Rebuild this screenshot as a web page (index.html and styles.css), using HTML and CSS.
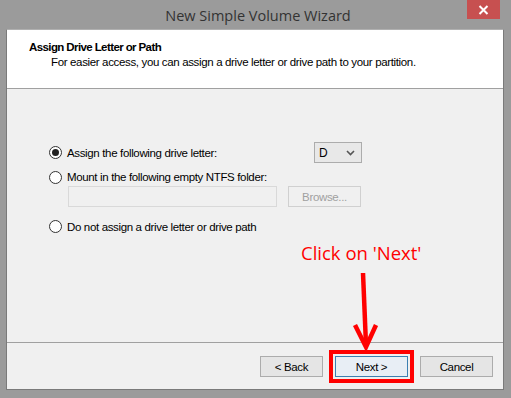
FILE: index.html
```html
<!DOCTYPE html>
<html lang="en">
<head>
  <meta charset="UTF-8" />
  <title>New Simple Volume Wizard</title>
  <link rel="stylesheet" href="styles.css">
</head>
<body>
  <div class="window">
    <div class="titlebar">
      <span class="title">New Simple Volume Wizard</span>
      <div class="close">
        <svg width="11" height="10" viewBox="0 0 11 10"><path d="M1.5 1 L9.5 9 M9.5 1 L1.5 9" stroke="#fff" stroke-width="2"/></svg>
      </div>
    </div>

    <div class="content">
      <div class="head">
        <div class="head-title">Assign Drive Letter or Path</div>
        <div class="head-sub">For easier access, you can assign a drive letter or drive path to your partition.</div>
      </div>

      <div class="main">
        <div class="row">
          <span class="radio checked"></span>
          <span class="label">Assign the following drive letter:</span>
          <div class="combo"><span>D</span>
            <svg width="9" height="6" viewBox="0 0 9 6"><path d="M1 1 L4.5 4.5 L8 1" fill="none" stroke="#555" stroke-width="1.6"/></svg>
          </div>
        </div>
        <div class="row row2">
          <span class="radio"></span>
          <span class="label">Mount in the following empty NTFS folder:</span>
        </div>
        <div class="folder-row">
          <div class="field"></div>
          <div class="btn disabled">Browse...</div>
        </div>
        <div class="row row3">
          <span class="radio"></span>
          <span class="label">Do not assign a drive letter or drive path</span>
        </div>

        <!-- annotation -->
        <div class="note">Click on 'Next'</div>
        <svg class="arrow" width="30" height="78" viewBox="0 0 30 78">
          <path d="M13 0 L16 72" stroke="#f00" stroke-width="4.5"/>
          <path d="M5 52 L16 74 L26 52" fill="none" stroke="#f00" stroke-width="4.5"/>
        </svg>
      </div>

      <div class="footer">
        <div class="btn">&lt; Back</div>
        <div class="btn next">Next &gt;</div>
        <div class="btn cancel">Cancel</div>
      </div>
    </div>
  </div>
</body>
</html>
```

FILE: styles.css
```css
* { margin: 0; padding: 0; box-sizing: border-box; }
html, body {
  width: 511px;
  height: 398px;
  overflow: hidden;
  background: #9b9b9b;
  font-family: 'Liberation Sans', Arial, sans-serif;
  font-size: 11.5px;
  letter-spacing: -0.35px;
  color: #000;
}

.window {
  display: flex;
  flex-direction: column;
  height: 398px;
  padding: 0 7px 8px 6px;
}

.titlebar {
  position: relative;
  height: 29px;
  display: flex;
  align-items: center;
  justify-content: center;
}
.title {
  font-family: 'Open Sans', sans-serif;
  font-size: 14.5px;
  letter-spacing: 0;
  color: #333;
  padding-left: 6px;
  padding-top: 1px;
}
.close {
  position: absolute;
  top: 0;
  right: 4px;
  width: 33px;
  height: 19px;
  background: #c75050;
  display: flex;
  align-items: center;
  justify-content: center;
}

.content {
  flex: 1;
  display: flex;
  flex-direction: column;
  background: #f0f0f0;
  border: 1px solid #7a7a7a;
  border-top-color: #b0b0b0;
}

.head {
  height: 59px;
  background: #fff;
  border-bottom: 1px solid #a0a0a0;
  padding: 10px 0 0 22px;
}
.head-title {
  font-weight: bold;
  letter-spacing: -0.6px;
  line-height: 14px;
}
.head-sub {
  padding-left: 22px;
  line-height: 16px;
}

.main {
  position: relative;
  flex: 1;
  padding: 53px 0 0 42px;
  border-bottom: 1px solid #a0a0a0;
}

.row {
  display: flex;
  align-items: center;
  height: 21px;
}
.row2 { height: 14px; margin-top: 7px; }
.row3 { margin-top: 9px; }
.radio {
  width: 13px;
  height: 13px;
  border: 1px solid #333;
  border-radius: 50%;
  background: #fff;
  display: flex;
  align-items: center;
  justify-content: center;
}
.radio.checked::after {
  content: "";
  width: 7px;
  height: 7px;
  border-radius: 50%;
  background: #222;
}
.label { margin-left: 5px; }

.combo {
  margin-left: auto;
  margin-right: 141px;
  width: 48px;
  height: 21px;
  border: 1px solid #acacac;
  background: #e8e8e8;
  display: flex;
  align-items: center;
  justify-content: space-between;
  padding: 0 6px 0 4px;
  font-size: 12px;
}

.folder-row {
  display: flex;
  gap: 11px;
  margin: 2px 0 0 19px;
}
.field {
  width: 209px;
  height: 21px;
  background: #f0f0f0;
  border: 1px solid #d9d9d9;
}

.btn {
  width: 73px;
  height: 21px;
  border: 1px solid #acacac;
  background: #e5e5e5;
  display: flex;
  align-items: center;
  justify-content: center;
}
.btn.disabled {
  color: #a0a0a0;
  border-color: #d0d0d0;
  background: #f0f0f0;
}

.note {
  position: absolute;
  left: 294px;
  top: 151px;
  font-family: 'Open Sans', sans-serif;
  font-size: 18.5px;
  letter-spacing: 0;
  color: #f00;
}
.arrow {
  position: absolute;
  left: 343px;
  top: 184px;
}

.footer {
  height: 46px;
  display: flex;
  align-items: flex-start;
  padding: 13px 0 0 253px;
}
.footer .btn { width: 63px; }
.footer .next {
  width: 73px;
  margin-left: 12px;
  border-color: #3c7fb1;
  background: #e8eef5;
  outline: 4px solid #f00;
  outline-offset: 2px;
}
.footer .cancel {
  width: 73px;
  margin-left: 12px;
}
```
